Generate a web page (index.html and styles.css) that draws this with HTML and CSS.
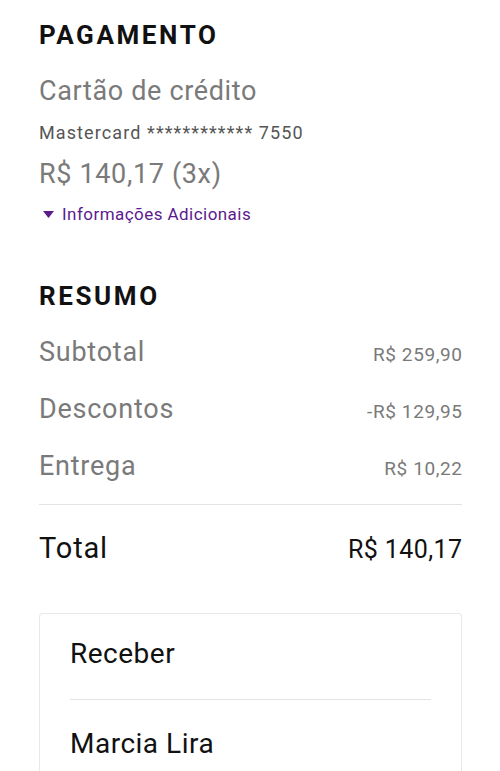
FILE: index.html
```html
<!DOCTYPE html>
<html lang="pt-BR">
<head>
    <meta charset="UTF-8">
    <meta name="viewport" content="width=device-width, initial-scale=1.0">
    <title>Pedido</title>
    <link rel="stylesheet" href="styles.css">
</head>
<body>
<div class="page">

    <!-- Pagamento -->
    <div class="section">
        <h2 class="section-title">PAGAMENTO</h2>
        <p class="pay-type">Cartão de crédito</p>
        <p class="pay-card">Mastercard ************ 7550</p>
        <p class="pay-value">R$ 140,17 (3x)</p>
        <a class="more-info" href="#">
            <svg class="caret" width="11" height="7" viewBox="0 0 11 7"><polygon points="0,0 11,0 5.5,7" fill="#5b1a8e"/></svg>
            Informações Adicionais
        </a>
    </div>

    <!-- Resumo -->
    <div class="section summary">
        <h2 class="section-title">RESUMO</h2>
        <div class="row">
            <span class="row-label">Subtotal</span>
            <span class="row-value">R$ 259,90</span>
        </div>
        <div class="row">
            <span class="row-label">Descontos</span>
            <span class="row-value">-R$ 129,95</span>
        </div>
        <div class="row">
            <span class="row-label">Entrega</span>
            <span class="row-value">R$ 10,22</span>
        </div>
        <div class="row total">
            <span class="row-label">Total</span>
            <span class="row-value">R$ 140,17</span>
        </div>
    </div>

    <!-- Receber -->
    <div class="card">
        <div class="card-title">Receber</div>
        <div class="card-item">Marcia Lira</div>
    </div>

</div>
</body>
</html>
```

FILE: styles.css
```css
* {
    margin: 0;
    padding: 0;
    box-sizing: border-box;
}

body {
    font-family: Roboto, "Liberation Sans", sans-serif;
    background-color: #fff;
    color: #000;
}

.page {
    padding: 20px 38px 0 39px;
}

.section-title {
    font-size: 26px;
    line-height: 30px;
    font-weight: 700;
    letter-spacing: 2.6px;
    color: #111;
}

/* Блок оплаты */
.pay-type {
    margin-top: 24px;
    font-size: 27px;
    line-height: 34px;
    letter-spacing: 0.65px;
    color: #7a7a7a;
}

.pay-card {
    margin-top: 13px;
    font-size: 18px;
    line-height: 24px;
    letter-spacing: 1.1px;
    color: #555;
}

.pay-value {
    margin-top: 12px;
    font-size: 27px;
    line-height: 34px;
    letter-spacing: 0.65px;
    color: #7a7a7a;
}

.more-info {
    display: flex;
    align-items: center;
    gap: 8px;
    margin-top: 12px;
    padding-left: 4px;
    font-size: 17px;
    line-height: 22px;
    letter-spacing: 0.45px;
    color: #5b1a8e;
    text-decoration: none;
}

/* Резюме */
.summary {
    margin-top: 56px;
}

.summary .section-title {
    margin-bottom: 13px;
}

.row {
    display: flex;
    justify-content: space-between;
    align-items: baseline;
    height: 57px;
    line-height: 57px;
}

.row-label {
    font-size: 27px;
    letter-spacing: 0.75px;
    color: #7a7a7a;
}

.row-value {
    font-size: 19px;
    letter-spacing: 0.6px;
    margin-right: -0.6px;
    color: #7a7a7a;
}

.row.total {
    margin-top: 9px;
    border-top: 1px solid #e3e3e3;
    height: 87px;
    line-height: 87px;
}

.row.total .row-label {
    font-size: 29px;
    letter-spacing: 0.85px;
    color: #111;
}

.row.total .row-value {
    font-size: 25px;
    letter-spacing: 0.4px;
    margin-right: -0.4px;
    color: #111;
}

/* Карточка получателя */
.card {
    margin-top: 22px;
    border: 1px solid #e8e8e8;
    border-bottom: none;
    border-radius: 4px 4px 0 0;
    padding: 0 30px;
}

.card-title,
.card-item {
    font-size: 28px;
    line-height: 40px;
    letter-spacing: 0.5px;
    color: #111;
}

.card-title {
    padding: 20px 0 25px;
    border-bottom: 1px solid #e3e3e3;
}

.card-item {
    padding: 24px 0;
}
```
